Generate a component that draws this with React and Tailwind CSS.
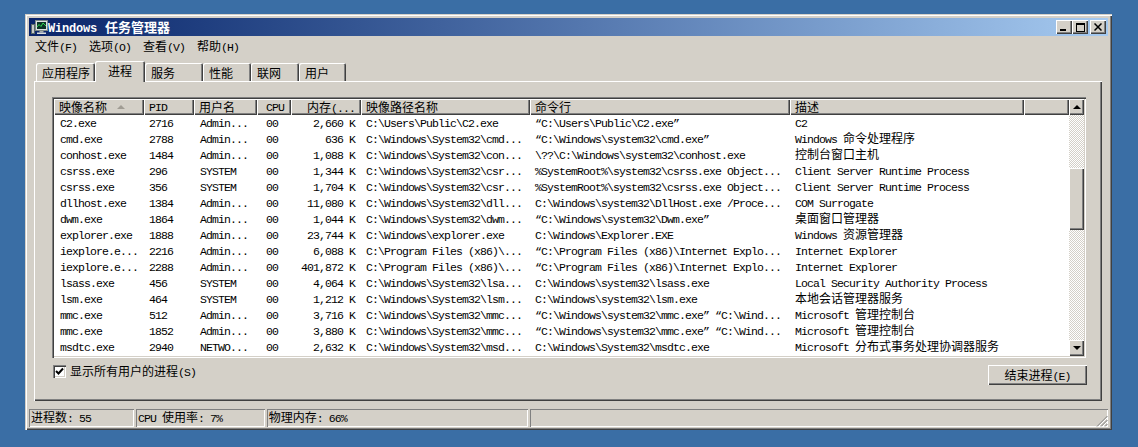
const raised = "shadow-[inset_1px_1px_0_#fff,inset_-1px_-1px_0_#404040,inset_-2px_-2px_0_#808080]";
const COLS = "grid grid-cols-[90px_50px_63px_34px_70px_169px_260px_234px_45px]";

function T({ children, bold }) {
  const parts = String(children).split(/([\u4e00-\u9fff：]+)/).filter(Boolean);
  return (
    <span className="whitespace-pre text-[11.5px] leading-none [font-family:'Liberation_Mono',monospace]">
      {parts.map((p, i) =>
        /[\u4e00-\u9fff：]/.test(p) ? (
          <span key={i} className="text-[12px] [font-family:'Noto_Sans_CJK_SC',sans-serif]">{p}</span>
        ) : (
          <span key={i} className={bold ? "text-[12px] tracking-[-0.2px] font-bold" : "tracking-[-0.9px]"}>{p}</span>
        )
      )}
    </span>
  );
}

const A = "Admin...";
const W = "C:\\Windows\\System32\\";
const rows = [
  ["C2.exe", "2716", A, "2,660 K", "C:\\Users\\Public\\C2.exe", "“C:\\Users\\Public\\C2.exe”", "C2"],
  ["cmd.exe", "2788", A, "636 K", W + "cmd...", "“C:\\Windows\\system32\\cmd.exe”", "Windows 命令处理程序"],
  ["conhost.exe", "1484", A, "1,088 K", W + "con...", "\\??\\C:\\Windows\\system32\\conhost.exe", "控制台窗口主机"],
  ["csrss.exe", "296", "SYSTEM", "1,344 K", W + "csr...", "%SystemRoot%\\system32\\csrss.exe Object...", "Client Server Runtime Process"],
  ["csrss.exe", "356", "SYSTEM", "1,704 K", W + "csr...", "%SystemRoot%\\system32\\csrss.exe Object...", "Client Server Runtime Process"],
  ["dllhost.exe", "1384", A, "11,080 K", W + "dll...", "C:\\Windows\\system32\\DllHost.exe /Proce...", "COM Surrogate"],
  ["dwm.exe", "1864", A, "1,044 K", W + "dwm...", "“C:\\Windows\\system32\\Dwm.exe”", "桌面窗口管理器"],
  ["explorer.exe", "1888", A, "23,744 K", "C:\\Windows\\explorer.exe", "C:\\Windows\\Explorer.EXE", "Windows 资源管理器"],
  ["iexplore.e...", "2216", A, "6,088 K", "C:\\Program Files (x86)\\...", "“C:\\Program Files (x86)\\Internet Explo...", "Internet Explorer"],
  ["iexplore.e...", "2288", A, "401,872 K", "C:\\Program Files (x86)\\...", "“C:\\Program Files (x86)\\Internet Explo...", "Internet Explorer"],
  ["lsass.exe", "456", "SYSTEM", "4,064 K", W + "lsa...", "C:\\Windows\\system32\\lsass.exe", "Local Security Authority Process"],
  ["lsm.exe", "464", "SYSTEM", "1,212 K", W + "lsm...", "C:\\Windows\\system32\\lsm.exe", "本地会话管理器服务"],
  ["mmc.exe", "512", A, "3,716 K", W + "mmc...", "“C:\\Windows\\system32\\mmc.exe” “C:\\Wind...", "Microsoft 管理控制台"],
  ["mmc.exe", "1852", A, "3,880 K", W + "mmc...", "“C:\\Windows\\system32\\mmc.exe” “C:\\Wind...", "Microsoft 管理控制台"],
  ["msdtc.exe", "2940", "NETWO...", "2,632 K", W + "msd...", "C:\\Windows\\System32\\msdtc.exe", "Microsoft 分布式事务处理协调器服务"],
];

const heads = [
  ["映像名称", "pl-[5px]"], ["PID", "pl-[5px]"], ["用户名", "pl-[5px]"], ["CPU", "pl-[9px]"],
  ["内存(...", "justify-end pr-[6px]"], ["映像路径名称", "pl-[5px]"], ["命令行", "pl-[5px]"], ["描述", "pl-[5px]"], ["", ""],
];

function Head({ label, cls, sort }) {
  return (
    <div className={`relative flex h-[16px] items-center bg-[#d4d0c8] pt-[2px] leading-none shadow-[inset_1px_1px_0_#fff,inset_-1px_-1px_0_#404040,inset_-2px_-2px_0_#808080] ${cls}`}>
      <T>{label}</T>
      {sort && <div className="absolute left-[63px] top-[6px] h-0 w-0 border-x-[4px] border-b-[4px] border-x-transparent border-b-[#a09c94]" />}
    </div>
  );
}

function Arrow({ up }) {
  return (
    <div className={`flex h-[16px] w-[15px] shrink-0 items-center justify-center bg-[#d4d0c8] ${raised}`}>
      <div className={up ? "h-0 w-0 border-x-[4px] border-b-[4px] border-x-transparent border-b-black" : "h-0 w-0 border-x-[4px] border-t-[4px] border-x-transparent border-t-black"} />
    </div>
  );
}

function Track({ cls }) {
  return <div className={`w-[15px] bg-[repeating-conic-gradient(#d4d0c8_0_25%,#fff_0_50%)] bg-[length:2px_2px] ${cls}`} />;
}

function Tab({ label, w, active }) {
  return active ? (
    <div className={`relative z-10 -mb-[1px] flex h-[21px] items-center justify-center rounded-t-[2px] bg-[#d4d0c8] shadow-[inset_1px_1px_0_#fff,inset_-1px_0_0_#404040,inset_-2px_0_0_#808080] ${w}`}>
      <T>{label}</T>
    </div>
  ) : (
    <div className={`flex h-[18px] items-center rounded-t-[2px] bg-[#d4d0c8] pl-[6px] pt-[4px] shadow-[inset_1px_1px_0_#fff,inset_-1px_0_0_#404040,inset_-2px_0_0_#808080] ${w}`}>
      <T>{label}</T>
    </div>
  );
}

function Stat({ label, w }) {
  return (
    <div className={`flex h-[18px] items-center pl-[2px] shadow-[inset_1px_1px_0_#808080,inset_-1px_-1px_0_#fff] ${w}`}>
      <T>{label}</T>
    </div>
  );
}

function WinBtn({ children, cls }) {
  return (
    <div className={`relative flex h-[14px] w-[16px] items-center justify-center bg-[#d4d0c8] ${raised} ${cls}`}>{children}</div>
  );
}

export default function App() {
  return (
    <div className="h-[447px] w-[1138px] overflow-hidden bg-[#3a6ea5] pl-[25px] pt-[14px] text-black">
      <div className="flex h-[416px] w-[1087px] flex-col bg-[#d4d0c8] p-[4px] shadow-[inset_1px_1px_0_#d4d0c8,inset_2px_2px_0_#fff,inset_-1px_-1px_0_#404040,inset_-2px_-2px_0_#808080]">
        {/* title bar */}
        <div className="flex h-[18px] shrink-0 items-center bg-gradient-to-r from-[#0a246a] to-[#a6caf0] pl-[2px] pr-[2px] text-white">
          <svg width="17" height="16" viewBox="0 0 17 16" className="shrink-0">
            <rect x="0.5" y="5.5" width="3" height="9" fill="#c9c9c9" stroke="#5a6a6a" />
            <rect x="4.5" y="1.5" width="12" height="10" fill="#dfe3e3" stroke="#7c8888" />
            <rect x="6" y="3" width="9" height="7" fill="#0c3326" />
            <path d="M6 8 L8 5.5 L10 7.5 L12 4 L15 7" fill="none" stroke="#33d654" strokeWidth="1" />
            <rect x="8.5" y="12" width="4" height="1.5" fill="#a4acac" />
            <rect x="6" y="13.5" width="9" height="1.5" fill="#d8dcdc" />
          </svg>
          <div className="flex items-baseline">
            <T bold>Windows</T>
            <span className="ml-[8px] text-[13px] font-bold leading-none [font-family:'Noto_Sans_CJK_SC',sans-serif]">任务管理器</span>
          </div>
          <div className="ml-auto flex text-black">
            <WinBtn><div className="absolute bottom-[3px] left-[4px] h-[2px] w-[6px] bg-black" /></WinBtn>
            <WinBtn cls="mr-[2px]"><div className="h-[9px] w-[9px] border border-t-2 border-black" /></WinBtn>
            <WinBtn>
              <svg width="8" height="8" viewBox="0 0 8 8"><path d="M0.5 0.5 L7.5 7.5 M7.5 0.5 L0.5 7.5" stroke="#000" strokeWidth="1.5" /></svg>
            </WinBtn>
          </div>
        </div>
        {/* menu */}
        <div className="flex h-[19px] shrink-0 items-center pl-[6px] leading-none">
          {["文件(F)", "选项(O)", "查看(V)", "帮助(H)"].map((m) => (
            <div key={m} className="w-[54px]"><T>{m}</T></div>
          ))}
        </div>
        {/* tabs */}
        <div className="ml-[5px] mt-[6px] flex h-[20px] shrink-0 items-end pl-[2px] leading-none">
          <Tab label="应用程序" w="w-[59px]" />
          <Tab label="进程" w="w-[50px]" active />
          <Tab label="服务" w="w-[58px] pl-[3px]" />
          <Tab label="性能" w="w-[48px]" />
          <Tab label="联网" w="w-[48px] pl-[4px]" />
          <Tab label="用户" w="w-[47px] pl-[4px]" />
        </div>
        {/* pane */}
        <div className="ml-[5px] flex h-[320px] w-[1068px] shrink-0 flex-col bg-[#d4d0c8] pl-[18px] pt-[16px] shadow-[inset_1px_1px_0_#fff,inset_-1px_-1px_0_#404040,inset_-2px_-2px_0_#808080]">
          <div className="flex h-[261px] w-[1034px] shrink-0 bg-white p-[2px] shadow-[inset_1px_1px_0_#808080,inset_2px_2px_0_#404040,inset_-1px_-1px_0_#fff,inset_-2px_-2px_0_#d4d0c8]">
            <div className="w-[1015px] shrink-0">
              <div className={COLS}>
                {heads.map(([l, c], i) => <Head key={i} label={l} cls={c} sort={i === 0} />)}
              </div>
              <div className="-mt-[2px]">
                {rows.map((r, i) => (
                  <div key={i} className={`${COLS} h-[16px] items-center leading-none`}>
                    <div className="pl-[6px]"><T>{r[0]}</T></div>
                    <div className="pl-[5px]"><T>{r[1]}</T></div>
                    <div className="pl-[6px]"><T>{r[2]}</T></div>
                    <div className="pl-[9px]"><T>00</T></div>
                    <div className="pr-[6px] text-right"><T>{r[3]}</T></div>
                    <div className="pl-[5px]"><T>{r[4]}</T></div>
                    <div className="pl-[5px]"><T>{r[5]}</T></div>
                    <div className="whitespace-nowrap pl-[5px]"><T>{r[6]}</T></div>
                    <div />
                  </div>
                ))}
              </div>
            </div>
            <div className="flex h-[257px] w-[15px] shrink-0 flex-col">
              <Arrow up />
              <Track cls="h-[53px]" />
              <div className={`h-[62px] w-[15px] bg-[#d4d0c8] ${raised}`} />
              <Track cls="h-[110px]" />
              <Arrow />
            </div>
          </div>
          <div className="mt-[7px] flex h-[20px] w-[1035px] items-start justify-between">
            <div className="flex h-[13px] items-center gap-[4px] leading-none">
              <div className="ml-[1px] flex h-[13px] w-[13px] shrink-0 items-center justify-center bg-white shadow-[inset_1px_1px_0_#808080,inset_2px_2px_0_#404040,inset_-1px_-1px_0_#fff,inset_-2px_-2px_0_#d4d0c8]">
                <svg width="9" height="9" viewBox="0 0 9 9"><path d="M1 4 L3.5 6.5 L8 1.5" fill="none" stroke="#000" strokeWidth="2" /></svg>
              </div>
              <T>显示所有用户的进程(S)</T>
            </div>
            <div className={`flex h-[20px] w-[99px] items-center justify-center bg-[#d4d0c8] pt-[2px] leading-none ${raised}`}>
              <T>结束进程(E)</T>
            </div>
          </div>
        </div>
        {/* status bar */}
        <div className="mt-[8px] flex h-[18px] shrink-0 gap-[2px] leading-none">
          <Stat label="进程数: 55" w="w-[105px]" />
          <Stat label="CPU 使用率: 7%" w="w-[129px]" />
          <Stat label="物理内存: 66%" w="w-[261px]" />
          <div className="relative h-[18px] w-[579px] shadow-[inset_1px_1px_0_#808080,inset_-1px_-1px_0_#fff]">
            <svg width="12" height="12" viewBox="0 0 12 12" className="absolute bottom-0 right-0">
              <path d="M11.5 1 L1 11.5 M11.5 5 L5 11.5 M11.5 9 L9 11.5" stroke="#808080" strokeWidth="1" />
              <path d="M11.5 2.5 L2.5 11.5 M11.5 6.5 L6.5 11.5" stroke="#fff" strokeWidth="1" />
            </svg>
          </div>
        </div>
      </div>
    </div>
  );
}
